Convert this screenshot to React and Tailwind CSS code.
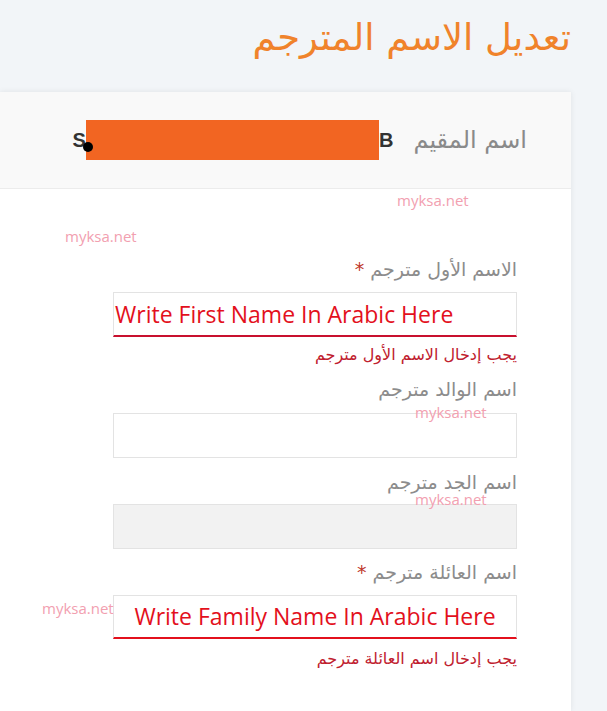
import React from "react";

const ar = { fontFamily: '"DejaVu Sans", "Noto Sans", sans-serif' };
const en = { fontFamily: '"Open Sans", "Noto Sans", sans-serif' };

function Mark({ className }) {
  return (
    <span
      className={"pointer-events-none absolute text-[15px] leading-none text-[#f2a0b0] " + className}
      style={en}
      dir="ltr"
    >
      myksa.net
    </span>
  );
}

export default function App() {
  return (
    <div dir="rtl" className="min-h-[711px] w-[607px] overflow-hidden bg-[#f2f5f8]" style={ar}>
      <div className="pr-[36px]">
        <h1 className="h-[92px] pt-[12px] text-[37px] leading-[52px] text-[#f0832b]">تعديل الاسم المترجم</h1>
        <div className="min-h-[619px] w-[571px] bg-white shadow-[0_0_6px_rgba(0,0,0,0.08)]">
          <div className="flex h-[97px] items-center border-b border-[#ececec] bg-[#f9f9f9] pr-[44px]">
            <span className="text-[24px] text-[#8a8a8a]">اسم المقيم</span>
            <div className="mr-[20px] flex items-center" dir="rtl">
              <span className="text-[20px] font-bold text-[#333]" style={{ fontFamily: '"Liberation Sans", sans-serif' }}>B</span>
              <div className="h-[40px] w-[293px] bg-[#f26522]"></div>
              <span className="relative ml-[7px] text-[20px] font-bold text-[#333]" style={{ fontFamily: '"Liberation Sans", sans-serif' }}>
                S
                <span className="absolute left-[10px] top-[17px] h-[10px] w-[10px] rounded-full bg-black"></span>
              </span>
            </div>
          </div>
          <div className="relative pb-[40px] pr-[54px] pt-[67px]">
            <Mark className="left-[397px] top-[4px]" />
            <Mark className="left-[65px] top-[40px]" />
            <Mark className="left-[415px] top-[216px]" />
            <Mark className="left-[415px] top-[303px]" />
            <Mark className="left-[42px] top-[412px]" />
            <div className="w-[404px]">
              <div className="text-[19px] leading-[26px] text-[#8c8c8c]">
                الاسم الأول مترجم <span className="text-[#c0392b]">*</span>
              </div>
              <div className="mt-[10px] flex h-[45px] items-center border border-b-2 border-[#e3e3e3] border-b-[#c8102e] bg-white px-[1px]" dir="ltr">
                <span className="text-[23px] text-[#e3101c]" style={en}>Write First Name In Arabic Here</span>
              </div>
              <div className="mt-[7px] text-[16px] leading-[22px] text-[#c0202e]">يجب إدخال الاسم الأول مترجم</div>
              <div className="mt-[10px] text-[19px] leading-[26px] text-[#8c8c8c]">اسم الوالد مترجم</div>
              <div className="mt-[11px] h-[45px] border border-[#e3e3e3] bg-white"></div>
              <div className="mt-[11px] text-[19px] leading-[26px] text-[#8c8c8c]">اسم الجد مترجم</div>
              <div className="mt-[9px] h-[45px] border border-[#e3e3e3] bg-[#f2f2f2]"></div>
              <div className="mt-[10px] text-[19px] leading-[26px] text-[#8c8c8c]">
                اسم العائلة مترجم <span className="text-[#c0392b]">*</span>
              </div>
              <div className="mt-[10px] flex h-[44px] items-center justify-center border border-b-2 border-[#e3e3e3] border-b-[#e3101c] bg-white" dir="ltr">
                <span className="text-[23px] text-[#e3101c]" style={en}>Write Family Name In Arabic Here</span>
              </div>
              <div className="mt-[9px] text-[16px] leading-[22px] text-[#c0202e]">يجب إدخال اسم العائلة مترجم</div>
            </div>
          </div>
        </div>
      </div>
    </div>
  );
}
